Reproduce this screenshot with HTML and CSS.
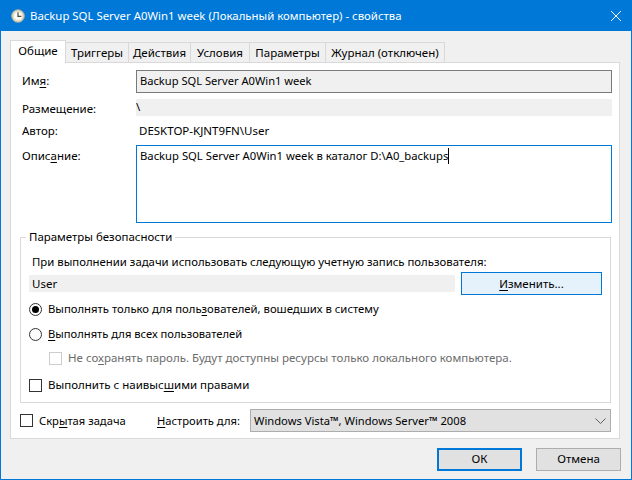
FILE: index.html
```html
<!DOCTYPE html>
<html lang="ru">
<head>
<meta charset="utf-8">
<title>Backup SQL Server A0Win1 week</title>
<link rel="stylesheet" href="styles.css">
</head>
<body>
<div class="window">
  <header class="titlebar">
    <svg class="clock" width="14" height="14" viewBox="0 0 14 14">
      <circle cx="7" cy="7" r="6.3" fill="#e3dfcc" stroke="#a9a698"/>
      <circle cx="7" cy="7" r="4.6" fill="#fbfaf3" stroke="#d8d2b8" stroke-width=".6"/>
      <path d="M7 3.2V7.3H10.4" fill="none" stroke="#4a4a44" stroke-width="1.2"/>
    </svg>
    <span class="title">Backup SQL Server A0Win1 week (Локальный компьютер) - свойства</span>
    <svg class="close" width="10" height="10" viewBox="0 0 10 10"><path d="M0 0L10 10M10 0L0 10" stroke="#fff" stroke-width="1"/></svg>
  </header>
  <div class="content">
    <nav class="tabs">
      <span class="tab tab-active">Общие</span>
      <span class="tab tab-2">Триггеры</span>
      <span class="tab tab-3">Действия</span>
      <span class="tab tab-4">Условия</span>
      <span class="tab tab-5">Параметры</span>
      <span class="tab tab-6">Журнал (отключен)</span>
    </nav>
    <main class="panel">
      <div class="row row-name">
        <label class="label">Им<u>я</u>:</label>
        <div class="field field-name">Backup SQL Server A0Win1 week</div>
      </div>
      <div class="row row-place">
        <label class="label">Размещение:</label>
        <div class="field field-place">\</div>
      </div>
      <div class="row row-author">
        <label class="label">Автор:</label>
        <div class="value">DESKTOP-KJNT9FN\User</div>
      </div>
      <div class="row row-desc">
        <label class="label">Опис<u>а</u>ние:</label>
        <div class="field field-desc">Backup SQL Server A0Win1 week в каталог D:\A0_backups<span class="caret"></span></div>
      </div>
      <fieldset class="group">
        <legend class="legend">Параметры безопасности</legend>
        <p class="hint">При выполнении задачи использовать следующую учетную запись пользователя:</p>
        <div class="user-row">
          <div class="field field-user">User</div>
          <button class="btn btn-change"><u>И</u>зменить...</button>
        </div>
        <div class="check radio-1"><span class="radio radio-on"></span><span>Выполнять только для поль<u>з</u>ователей, вошедших в систему</span></div>
        <div class="check radio-2"><span class="radio"></span><span><u>В</u>ыполнять для всех пользователей</span></div>
        <div class="check check-pw disabled"><span class="box box-off"></span><span>Не со<u>х</u>ранять пароль. Будут доступны ресурсы только локального компьютера.</span></div>
        <div class="check check-high"><span class="box"></span><span>Выполнить с наивыс<u>ш</u>ими правами</span></div>
      </fieldset>
      <div class="bottom-row">
        <div class="check check-hidden"><span class="box"></span><span>Скр<u>ы</u>тая задача</span></div>
        <label class="config-label"><u>Н</u>астроить для:</label>
        <div class="select">
          <span>Windows Vista™, Windows Server™ 2008</span>
          <svg width="11" height="6" viewBox="0 0 11 6"><path d="M.5 .5L5.5 5.5L10.5 .5" fill="none" stroke="#606060"/></svg>
        </div>
      </div>
    </main>
    <footer class="actions">
      <button class="btn btn-ok">ОК</button>
      <button class="btn btn-cancel">Отмена</button>
    </footer>
  </div>
</div>
</body>
</html>
```
FILE: styles.css
```css
* { box-sizing: border-box; }
html, body { margin: 0; padding: 0; }
body {
  font-family: "Noto Sans", sans-serif;
  font-size: 11.5px;
  line-height: 16px;
  color: #000;
  background: #f0f0f0;
}
u { text-underline-offset: 2px; text-decoration-thickness: 1px; }
.window {
  width: 632px;
  height: 480px;
  border: 1px solid #0078d7;
  border-top: 0;
  display: flex;
  flex-direction: column;
  overflow: hidden;
}
.titlebar {
  height: 31px;
  flex: none;
  background: #0078d7;
  color: #fff;
  display: flex;
  align-items: center;
  padding: 0 10px 0 10px;
  gap: 5px;
  font-size: 11.4px;
}
.title { flex: 1; }
.content { flex: 1; display: flex; flex-direction: column; padding: 9px 11px 0 9px; }
.tabs { display: flex; height: 22px; align-items: flex-end; position: relative; z-index: 1; }
.tab {
  height: 20px;
  border: 1px solid #d9d9d9;
  border-left: 0;
  border-bottom: 0;
  display: flex;
  align-items: center;
  justify-content: center;
  background: #f0f0f0;
}
.tab-active { height: 23px; width: 56px; background: #fff; border-left: 1px solid #d9d9d9; margin-bottom: -1px; padding-bottom: 2px; }
.tab-2 { width: 63px; }
.tab-3 { width: 62px; }
.tab-4 { width: 59px; }
.tab-5 { width: 76px; }
.tab-6 { width: 119px; }
.panel {
  width: 610px;
  height: 377px;
  background: #fff;
  border: 1px solid #d9d9d9;
  padding: 7px 7px 0 9px;
  display: flex;
  flex-direction: column;
}
.row { display: flex; align-items: flex-start; }
.label { width: 116px; flex: none; padding-left: 2px; }
.field { flex: 1; background: #f0f0f0; padding-left: 3px; }
.row-name { height: 23px; }
.row-name .label { padding-top: 3px; }
.field-name { height: 23px; border: 1px solid #7a7a7a; padding: 1px 0 0 3px; font-size: 11.15px; line-height: 18px; }
.row-place { height: 17px; margin-top: 6px; }
.row-place .label { padding-top: 2px; }
.field-place { height: 17px; padding: 0; }
.row-author { margin-top: 7px; height: 16px; }
.value { padding-left: 3px; }
.row-desc { margin-top: 6px; height: 78px; }
.row-desc .label { padding-top: 3px; }
.field-desc {
  height: 78px;
  background: #fff;
  border: 1px solid #0078d7;
  padding: 2px 0 0 3px;
  font-size: 11.28px;
}
.caret { display: inline-block; width: 1px; height: 16px; background: #000; vertical-align: top; }
.group {
  margin: 7px 0 0;
  padding: 10px 8px 0 8px;
  width: 591px;
  height: 173px;
  border: 1px solid #d9d9d9;
  min-width: 0;
}
.legend { padding: 0 3px; margin-left: -3px; line-height: 14px; font-size: 11.45px; }
.hint { margin: 0 0 0 3px; height: 16px; font-size: 11.37px; }
.user-row { display: flex; margin-top: 2px; gap: 6px; height: 23px; align-items: center; }
.field-user { flex: none; width: 426px; height: 17px; padding: 0 0 0 3px; line-height: 17px; }
.btn {
  font: inherit;
  color: #000;
  padding: 0;
  background: #e1e1e1;
  border: 1px solid #adadad;
  height: 23px;
}
.btn-change { width: 141px; background: #e5f1fb; border-color: #0078d7; }
.check { display: flex; align-items: center; gap: 6px; height: 16px; }
.disabled { color: #6d6d6d; }
.radio, .box { flex: none; width: 13px; height: 13px; background: #fff; border: 1px solid #333; }
.radio { border-radius: 50%; position: relative; }
.radio-on::after {
  content: "";
  position: absolute;
  left: 2px; top: 2px;
  width: 7px; height: 7px;
  border-radius: 50%;
  background: #000;
}
.box-off { border-color: #ccc; }
.radio-1 { margin-top: 6px; font-size: 11.3px; }
.radio-2 { margin-top: 9px; font-size: 11.2px; }
.check-pw { margin: 8px 0 0 20px; font-size: 11.52px; }
.check-high { margin-top: 11px; }
.bottom-row { display: flex; align-items: center; height: 23px; margin-top: 6px; }
.check-hidden { width: 137px; font-size: 11.2px; }
.config-label { width: 93px; font-size: 11.2px; }
.select {
  flex: none;
  width: 361px;
  height: 23px;
  background: #e1e1e1;
  border: 1px solid #adadad;
  display: flex;
  align-items: center;
  justify-content: space-between;
  padding: 0 4px 0 3px;
  font-size: 11.2px;
}
.actions { display: flex; justify-content: flex-end; gap: 14px; margin-top: 9px; margin-right: -1px; }
.btn-ok { width: 85px; border: 2px solid #0078d7; padding-bottom: 2px; }
.btn-cancel { width: 85px; padding-bottom: 2px; }
```
